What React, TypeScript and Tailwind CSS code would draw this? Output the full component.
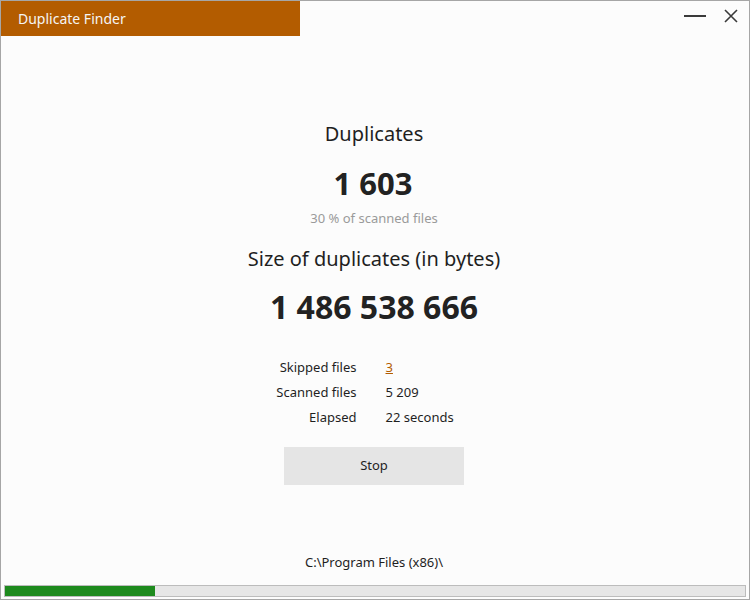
import React from "react";

const font = { fontFamily: '"Noto Sans", "Open Sans", sans-serif' };

export default function App() {
  return (
    <div
      className="w-[750px] h-[600px] bg-[#fcfcfc] border border-[#a6a6a6] flex flex-col text-[#1f1f1f]"
      style={font}
    >
      {/* title bar */}
      <div className="flex items-start justify-between h-[36px]">
        <div className="w-[299px] h-[35px] bg-[#b35c00] text-[#f5f5f5] text-[14px] pl-[17px] flex items-center">
          Duplicate Finder
        </div>
        <div className="flex items-center gap-[18px] pr-[11px] pt-[8px]">
          <div className="w-[22px] h-[2px] bg-[#3a3a3a]" />
          <svg width="14" height="14" viewBox="0 0 14 14" className="text-[#3a3a3a]">
            <path d="M1 1 L13 13 M13 1 L1 13" stroke="currentColor" strokeWidth="1.6" fill="none" />
          </svg>
        </div>
      </div>

      {/* content */}
      <div className="flex-1 flex flex-col items-center pr-[2px]">
        <div className="mt-[84px] text-[20px] leading-[26px]">Duplicates</div>
        <div className="mt-[18px] text-[31px] leading-[36px] font-bold text-[#222] -translate-x-[1px]">1 603</div>
        <div className="mt-[9px] text-[13px] leading-[16px] text-[#9a9a9a]">30 % of scanned files</div>
        <div className="mt-[19px] text-[20px] leading-[28px]">Size of duplicates (in bytes)</div>
        <div className="mt-[15px] text-[32px] leading-[38px] font-bold text-[#222]">1 486 538 666</div>

        <div className="mt-[32px] ml-[4px] grid grid-cols-[120px_130px] gap-x-[29px] gap-y-[7px] text-[13px] leading-[18px]">
          <div className="text-right">Skipped files</div>
          <div>
            <span className="text-[#b35c00] underline">3</span>
          </div>
          <div className="text-right">Scanned files</div>
          <div>5 209</div>
          <div className="text-right">Elapsed</div>
          <div>22 seconds</div>
        </div>

        <button className="mt-[21px] w-[180px] h-[38px] bg-[#e5e5e5] text-[13px] text-[#1f1f1f]">
          Stop
        </button>

        <div className="mt-auto mb-[14px] text-[13px] leading-[18px]">
          C:\Program Files (x86)\
        </div>
      </div>

      {/* progress */}
      <div className="px-[3px] pb-[2px]">
        <div className="h-[12px] border border-[#bcbcbc] bg-[#e6e6e6]">
          <div className="h-full w-[150px] bg-[#1d8a1d]" />
        </div>
      </div>
    </div>
  );
}
